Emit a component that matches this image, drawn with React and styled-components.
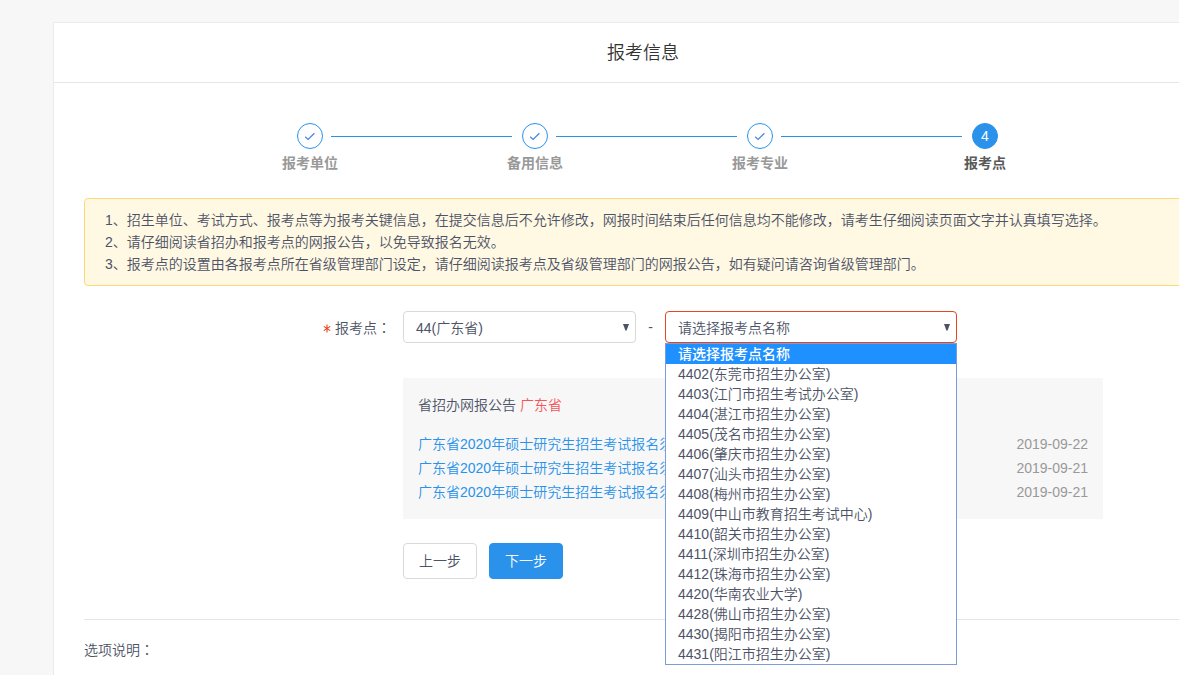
import React, { useState } from "react";
import styled, { createGlobalStyle } from "styled-components";

const GlobalStyle = createGlobalStyle`
  * {
    box-sizing: border-box;
  }

  body {
    margin: 0;
    background: #f7f7f7;
    color: #4d5366;
    font-family: "Liberation Sans", "Noto Sans CJK SC", sans-serif;
    font-size: 14px;
    font-weight: 350;
    line-height: 20px;
  }

  button,
  select {
    color: inherit;
    font: inherit;
  }
`;

const Page = styled.main`
  display: flex;
  min-height: 100vh;
  padding: 22px 0 0 53px;
  overflow: hidden;
`;

const Card = styled.section`
  flex: 1;
  margin-right: -54px;
  background: #fff;
  border: 1px solid #ebebeb;
  border-bottom: 0;
`;

const CardHeader = styled.header`
  padding: 16px 30px 15px;
  border-bottom: 1px solid #e6e6e6;
`;

const Title = styled.h1`
  margin: 0;
  color: #333;
  font-size: 18px;
  font-weight: 350;
  line-height: 28px;
  text-align: center;
`;

const CardBody = styled.div`
  padding: 40px 30px 12px;
`;

const StepList = styled.ol`
  display: flex;
  max-width: 710px;
  margin: 0 auto 25px;
  padding: 0 0 0 9px;
  list-style: none;
`;

const StepItem = styled.li`
  display: flex;
  flex: ${(props) => (props.$last ? "none" : "1")};
`;

const Step = styled.div`
  display: flex;
  flex-direction: column;
  align-items: center;
  gap: 4px;
  width: 26px;
`;

const StepCircle = styled.span`
  display: flex;
  align-items: center;
  justify-content: center;
  width: 26px;
  height: 26px;
  border: 1px solid #2a92ea;
  border-radius: 50%;
  background: ${(props) => (props.$active ? "#2a92ea" : "#fff")};
  color: ${(props) => (props.$active ? "#fff" : "#2a92ea")};
`;

const StepLabel = styled.span`
  color: ${(props) => (props.$active ? "#595959" : "#999")};
  font-weight: 700;
  white-space: nowrap;
`;

const StepLine = styled.span`
  flex: 1;
  height: 1px;
  margin: 13px 10px 0 8px;
  background: #2a92ea;
`;

const Notice = styled.div`
  margin-bottom: 25px;
  padding: 10px 20px;
  background: #fff8e3;
  border: 1px solid #ffd777;
  border-radius: 4px;
`;

const NoticeLine = styled.p`
  margin: 0;
  line-height: 22px;
`;

const FormRow = styled.div`
  display: grid;
  grid-template-columns: 319px 1fr;
`;

const FormLabel = styled.label`
  padding-right: 12px;
  line-height: 34px;
  text-align: right;
`;

const Required = styled.svg`
  margin-right: 4px;
`;

const Colon = styled.span`
  font-family: "Noto Sans CJK TC", sans-serif;
  line-height: 1;
`;

const FormContent = styled.div`
  grid-column: 2;
`;

const SelectGroup = styled.div`
  display: flex;
  align-items: center;
  margin-bottom: 35px;
`;

const Dash = styled.span`
  width: 29px;
  text-align: center;
`;

const SelectBox = styled.div`
  position: relative;
  width: ${(props) => (props.$wide ? "292px" : "233px")};
`;

const Select = styled.select`
  display: block;
  width: 100%;
  height: 32px;
  padding: 1px 24px 0 12px;
  background: #fff;
  border: 1px solid ${(props) => (props.$invalid ? "#e8441f" : "#d9d9d9")};
  border-radius: 4px;
  appearance: none;
  outline: none;
`;

const Arrow = styled.svg`
  position: absolute;
  top: 12px;
  right: 7px;
  pointer-events: none;
`;

const Menu = styled.ul`
  position: absolute;
  top: 100%;
  left: 0;
  z-index: 10;
  width: 100%;
  margin: 0;
  padding: 0;
  background: #fff;
  border: 1px solid #7a9cd8;
  list-style: none;
`;

const MenuItem = styled.li`
  padding: 0 12px;
  background: ${(props) => (props.$selected ? "#1e90ff" : "#fff")};
  color: ${(props) => (props.$selected ? "#fff" : "inherit")};
  font-weight: ${(props) => (props.$selected ? "500" : "350")};
  cursor: default;
`;

const Bulletin = styled.div`
  max-width: 700px;
  margin-bottom: 24px;
  padding: 15px;
  background: #f7f7f7;
  line-height: 24px;
`;

const BulletinTitle = styled.p`
  margin: 0 0 15px;
`;

const Province = styled.span`
  color: #f5545a;
`;

const BulletinList = styled.ul`
  margin: 0;
  padding: 0;
  list-style: none;
`;

const BulletinItem = styled.li`
  display: flex;
  justify-content: space-between;
`;

const BulletinLink = styled.a`
  color: #2a92ea;
  text-decoration: none;
`;

const BulletinDate = styled.time`
  color: #999;
`;

const Actions = styled.div`
  display: flex;
  gap: 12px;
`;

const Button = styled.button`
  height: 36px;
  padding: 0 15px;
  background: ${(props) => (props.$primary ? "#2a92ea" : "#fff")};
  border: 1px solid ${(props) => (props.$primary ? "#2a92ea" : "#d9d9d9")};
  border-radius: 4px;
  color: ${(props) => (props.$primary ? "#fff" : "inherit")};
  cursor: pointer;
`;

const Remark = styled.footer`
  margin-top: 40px;
  padding-top: 20px;
  border-top: 1px solid #e6e6e6;
`;

const steps = ["报考单位", "备用信息", "报考专业", "报考点"];
const currentStep = 3;

const notices = [
  "1、招生单位、考试方式、报考点等为报考关键信息，在提交信息后不允许修改，网报时间结束后任何信息均不能修改，请考生仔细阅读页面文字并认真填写选择。",
  "2、请仔细阅读省招办和报考点的网报公告，以免导致报名无效。",
  "3、报考点的设置由各报考点所在省级管理部门设定，请仔细阅读报考点及省级管理部门的网报公告，如有疑问请咨询省级管理部门。",
];

const sites = [
  "请选择报考点名称",
  "4402(东莞市招生办公室)",
  "4403(江门市招生考试办公室)",
  "4404(湛江市招生办公室)",
  "4405(茂名市招生办公室)",
  "4406(肇庆市招生办公室)",
  "4407(汕头市招生办公室)",
  "4408(梅州市招生办公室)",
  "4409(中山市教育招生考试中心)",
  "4410(韶关市招生办公室)",
  "4411(深圳市招生办公室)",
  "4412(珠海市招生办公室)",
  "4420(华南农业大学)",
  "4428(佛山市招生办公室)",
  "4430(揭阳市招生办公室)",
  "4431(阳江市招生办公室)",
];

const bulletins = [
  { id: 1, title: "广东省2020年硕士研究生招生考试报名须知", date: "2019-09-22" },
  { id: 2, title: "广东省2020年硕士研究生招生考试报名须知", date: "2019-09-21" },
  { id: 3, title: "广东省2020年硕士研究生招生考试报名须知", date: "2019-09-21" },
];

const CheckIcon = () => (
  <svg width="12" height="12" viewBox="0 0 12 12" fill="none" aria-hidden="true">
    <path d="M1.2 6.8L4.1 9.4L10.4 3.2" stroke="#4a80e4" strokeWidth="1.2" />
  </svg>
);

const RequiredMark = () => (
  <Required width="8" height="9" viewBox="0 0 8 9" aria-hidden="true">
    <path d="M4 0.5V8.5M0.8 2.4L7.2 6.6M7.2 2.4L0.8 6.6" stroke="#e8441f" strokeWidth="1.1" />
  </Required>
);

const SelectArrow = () => (
  <Arrow width="6" height="8" viewBox="0 0 6 8" aria-hidden="true">
    <path d="M0 1H6L3.6 7.4H2.4Z" fill="#4d5366" />
  </Arrow>
);

const App = () => {
  const [site, setSite] = useState(sites[0]);

  return (
    <>
      <GlobalStyle />
      <Page>
        <Card>
          <CardHeader>
            <Title>报考信息</Title>
          </CardHeader>

          <CardBody>
            <StepList>
              {steps.map((label, index) => (
                <StepItem key={label} $last={index === steps.length - 1}>
                  <Step>
                    <StepCircle $active={index === currentStep}>
                      {index < currentStep ? <CheckIcon /> : index + 1}
                    </StepCircle>
                    <StepLabel $active={index === currentStep}>{label}</StepLabel>
                  </Step>
                  {index < steps.length - 1 && <StepLine />}
                </StepItem>
              ))}
            </StepList>

            <Notice>
              {notices.map((text) => (
                <NoticeLine key={text}>{text}</NoticeLine>
              ))}
            </Notice>

            <FormRow>
              <FormLabel htmlFor="province">
                <RequiredMark />
                报考点<Colon>：</Colon>
              </FormLabel>
              <FormContent>
                <SelectGroup>
                  <SelectBox>
                    <Select id="province" defaultValue="44">
                      <option value="44">44(广东省)</option>
                    </Select>
                    <SelectArrow />
                  </SelectBox>
                  <Dash>-</Dash>
                  <SelectBox $wide>
                    <Select
                      $invalid
                      aria-label="报考点名称"
                      value={site}
                      onChange={(e) => setSite(e.target.value)}
                    >
                      {sites.map((name) => (
                        <option key={name}>{name}</option>
                      ))}
                    </Select>
                    <SelectArrow />
                    <Menu role="listbox" aria-label="报考点名称">
                      {sites.map((name) => (
                        <MenuItem
                          key={name}
                          role="option"
                          aria-selected={name === site}
                          $selected={name === site}
                          onClick={() => setSite(name)}
                        >
                          {name}
                        </MenuItem>
                      ))}
                    </Menu>
                  </SelectBox>
                </SelectGroup>

                <Bulletin>
                  <BulletinTitle>
                    省招办网报公告 <Province>广东省</Province>
                  </BulletinTitle>
                  <BulletinList>
                    {bulletins.map((item) => (
                      <BulletinItem key={item.id}>
                        <BulletinLink href="#">{item.title}</BulletinLink>
                        <BulletinDate>{item.date}</BulletinDate>
                      </BulletinItem>
                    ))}
                  </BulletinList>
                </Bulletin>

                <Actions>
                  <Button type="button">上一步</Button>
                  <Button type="button" $primary>
                    下一步
                  </Button>
                </Actions>
              </FormContent>
            </FormRow>

            <Remark>
              选项说明<Colon>：</Colon>
            </Remark>
          </CardBody>
        </Card>
      </Page>
    </>
  );
};

export default App;
